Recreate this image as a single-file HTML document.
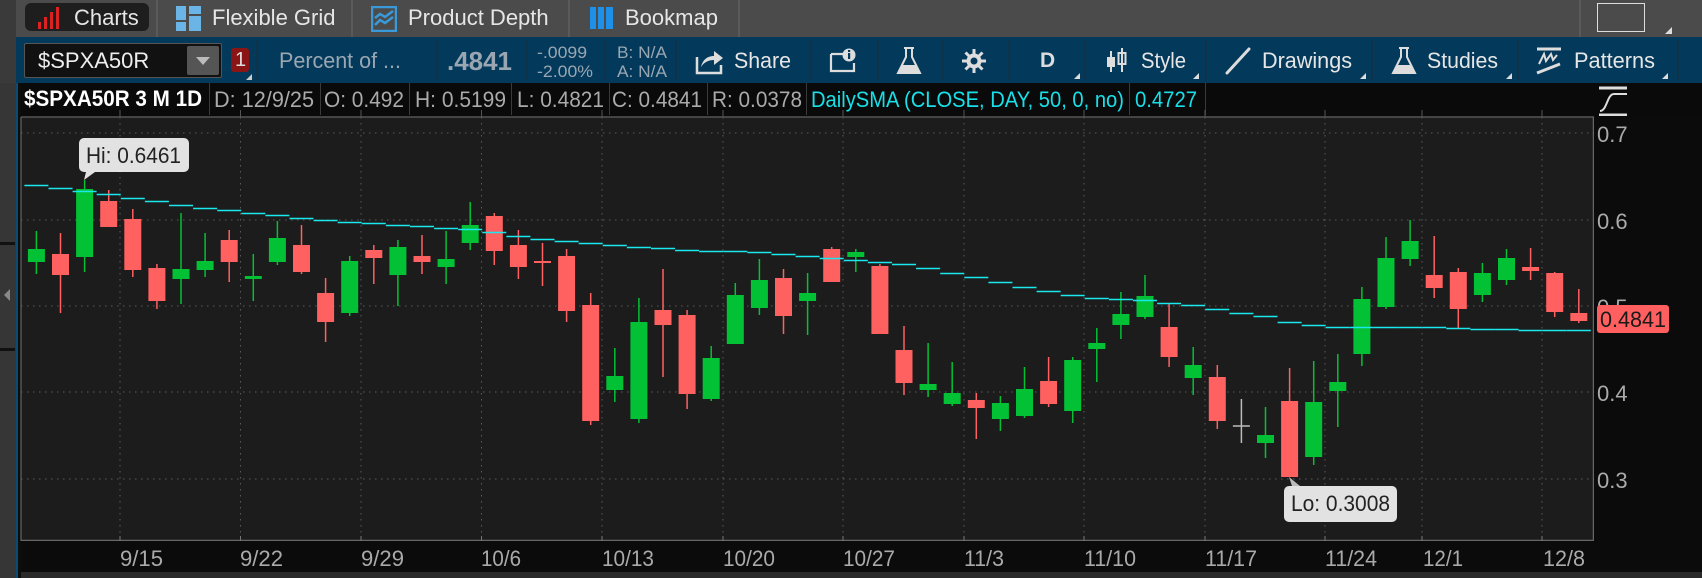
<!DOCTYPE html>
<html><head><meta charset="utf-8">
<style>
*{margin:0;padding:0;box-sizing:border-box}
body{width:1702px;height:578px;overflow:hidden;background:#1c1c1c;font-family:"Liberation Sans",sans-serif;position:relative}
.abs{position:absolute}
.t{position:absolute;white-space:nowrap;display:inline-block;transform-origin:0 0;line-height:1}
.sep{position:absolute;width:2px;background:#10324a}
.sep2{position:absolute;width:2px;background:#5a5a5a}
.sep3{position:absolute;width:1px;background:#3a3a3a}
.corner{position:absolute;width:0;height:0;border-left:7px solid transparent;border-bottom:7px solid #ddd}
</style></head><body>
<!-- tab bar -->
<div class="abs" style="left:0;top:0;width:1702px;height:37px;background:#4b4b4b"></div>
<div class="abs" style="left:0;top:0;width:16px;height:37px;background:#3a3a3a"></div>
<div class="abs" style="left:25px;top:3px;width:124px;height:28px;background:#1e1e1e;border-radius:6px"></div>
<svg class="abs" style="left:36px;top:6px" width="24" height="24"><rect x="2" y="16" width="3" height="7" fill="#d22"/><rect x="8" y="11" width="3" height="12" fill="#d22"/><rect x="14" y="6" width="3" height="17" fill="#d22"/><rect x="20" y="1" width="3" height="22" fill="#d22"/></svg>
<span class="t" style="left:74px;top:7px;font-size:22px;color:#e6e6e6">Charts</span>
<div class="sep2" style="left:156px;top:0;height:37px"></div>
<svg class="abs" style="left:176px;top:6px" width="26" height="26"><rect x="0" y="0" width="10" height="14" fill="#6ab4e6"/><rect x="0" y="16" width="10" height="9" fill="#6ab4e6"/><rect x="13" y="0" width="12" height="8" fill="#6ab4e6"/><rect x="13" y="10" width="12" height="15" fill="#6ab4e6"/></svg>
<span class="t" style="left:212px;top:7px;font-size:22px;color:#e6e6e6">Flexible Grid</span>
<div class="sep2" style="left:351px;top:0;height:37px"></div>
<svg class="abs" style="left:371px;top:6px" width="26" height="26"><rect x="1" y="1" width="24" height="24" fill="none" stroke="#3a9ad9" stroke-width="2.5"/><path d="M4 12 L9 8 L14 11 L22 5 M4 19 L9 14 L14 17 L22 11" stroke="#3a9ad9" stroke-width="2.5" fill="none"/></svg>
<span class="t" style="left:408px;top:7px;font-size:22px;color:#e6e6e6">Product Depth</span>
<div class="sep2" style="left:568px;top:0;height:37px"></div>
<svg class="abs" style="left:590px;top:7px" width="26" height="24"><rect x="0" y="0" width="6" height="22" fill="#1e90e8"/><rect x="8" y="0" width="6" height="22" fill="#1e90e8"/><rect x="16" y="0" width="7" height="22" fill="#1e90e8"/></svg>
<span class="t" style="left:625px;top:7px;font-size:22px;color:#e6e6e6">Bookmap</span>
<div class="sep2" style="left:738px;top:0;height:37px"></div>
<div class="sep2" style="left:1579px;top:0;height:37px"></div>
<div class="abs" style="left:1597px;top:3px;width:48px;height:29px;border:1.5px solid #ddd"></div>
<div class="corner" style="left:1665px;top:27px"></div>

<!-- toolbar -->
<div class="abs" style="left:0;top:37px;width:1702px;height:46px;background:#033a5b"></div>
<div class="abs" style="left:0;top:37px;width:16px;height:46px;background:#3a3a3a"></div>
<div class="abs" style="left:24px;top:43px;width:198px;height:35px;background:#111;border:1px solid #555;border-radius:2px"></div>
<span class="t" style="left:38px;top:50px;font-size:22px;color:#eee">$SPXA50R</span>
<div class="abs" style="left:187px;top:46px;width:32px;height:29px;background:#555;border-radius:2px"></div>
<div class="abs" style="left:196px;top:57px;width:0;height:0;border-left:7px solid transparent;border-right:7px solid transparent;border-top:8px solid #bbb"></div>
<div class="abs" style="left:231px;top:48px;width:18px;height:24px;background:#8b1414;border-radius:3px"></div>
<span class="t" style="left:235px;top:50px;font-size:20px;color:#ddd">1</span>
<div class="corner" style="left:246px;top:74px;border-bottom-color:#ccc;border-left-width:6px;border-bottom-width:6px"></div>
<div class="sep" style="left:256px;top:40px;height:40px"></div>
<span class="t" style="left:279px;top:50px;font-size:22px;color:#9aa7b2;width:122px">Percent of ...</span>
<div class="sep" style="left:436px;top:40px;height:40px"></div>
<span class="t" style="left:447px;top:48px;font-size:26px;font-weight:bold;color:#9aa7b2;width:65px">.4841</span>
<div class="sep" style="left:526px;top:40px;height:40px"></div>
<span class="t" style="left:537px;top:44px;font-size:17px;color:#9aa7b2;width:50px">-.0099</span>
<span class="t" style="left:537px;top:63px;font-size:17px;color:#9aa7b2;width:56px">-2.00%</span>
<div class="sep" style="left:604px;top:40px;height:40px"></div>
<span class="t" style="left:617px;top:44px;font-size:17px;color:#9aa7b2;width:50px">B: N/A</span>
<span class="t" style="left:617px;top:63px;font-size:17px;color:#9aa7b2;width:50px">A: N/A</span>
<div class="sep" style="left:675px;top:40px;height:40px"></div>
<svg class="abs" style="left:695px;top:47px" width="30" height="28"><path d="M2 10 V26 H26 V18" stroke="#ddd" stroke-width="2.5" fill="none"/><path d="M6 20 C8 12 13 9 19 9 V4 L28 11 L19 18 V13 C14 13 9 15 6 20Z" fill="#ddd"/></svg>
<span class="t" style="left:734px;top:50px;font-size:22px;color:#e6e6e6;width:57px">Share</span>
<div class="sep" style="left:810px;top:40px;height:40px"></div>
<svg class="abs" style="left:829px;top:48px" width="28" height="26"><path d="M2 6 H16 M2 6 V23 H25 V15" stroke="#ddd" stroke-width="2.2" fill="none"/><circle cx="20" cy="7" r="6.5" fill="#ddd"/><rect x="19" y="5" width="2.2" height="6" fill="#033a5b"/><rect x="19" y="2" width="2.2" height="2" fill="#033a5b"/></svg>
<div class="sep" style="left:877px;top:40px;height:40px"></div>
<svg class="abs" style="left:896px;top:46px" width="26" height="30"><path d="M8 2 H18 M10 2 V11 L2 27 H24 L16 11 V2" stroke="#ddd" stroke-width="2" fill="none"/><path d="M6 19 H20 L24 27 H2Z" fill="#ddd"/></svg>
<div class="sep" style="left:942px;top:40px;height:40px"></div>
<svg class="abs" style="left:960px;top:47px" width="28" height="28"><g stroke="#ddd" stroke-width="3"><line x1="14" y1="2" x2="14" y2="26"/><line x1="2" y1="14" x2="26" y2="14"/><line x1="5.5" y1="5.5" x2="22.5" y2="22.5"/><line x1="22.5" y1="5.5" x2="5.5" y2="22.5"/></g><circle cx="14" cy="14" r="7.5" fill="#ddd"/><circle cx="14" cy="14" r="3.5" fill="#033a5b"/></svg>
<div class="sep" style="left:1008px;top:40px;height:40px"></div>
<span class="t" style="left:1040px;top:50px;font-size:21px;font-weight:bold;color:#ddd">D</span>
<div class="corner" style="left:1074px;top:73px;border-left-width:6px;border-bottom-width:6px"></div>
<div class="sep" style="left:1084px;top:40px;height:40px"></div>
<svg class="abs" style="left:1106px;top:47px" width="22" height="28"><line x1="5" y1="4" x2="5" y2="25" stroke="#ddd" stroke-width="2"/><rect x="1" y="10" width="8" height="10" fill="#ddd"/><line x1="16" y1="1" x2="16" y2="25" stroke="#ddd" stroke-width="2"/><rect x="12.5" y="6" width="7" height="11" fill="none" stroke="#ddd" stroke-width="2"/></svg>
<span class="t" style="left:1141px;top:50px;font-size:22px;color:#e6e6e6;width:45px">Style</span>
<div class="corner" style="left:1193px;top:73px;border-left-width:6px;border-bottom-width:6px"></div>
<div class="sep" style="left:1205px;top:40px;height:40px"></div>
<svg class="abs" style="left:1224px;top:47px" width="28" height="28"><line x1="3" y1="26" x2="25" y2="2" stroke="#ddd" stroke-width="3" stroke-linecap="round"/></svg>
<span class="t" style="left:1262px;top:50px;font-size:22px;color:#e6e6e6;width:90px">Drawings</span>
<div class="corner" style="left:1360px;top:73px;border-left-width:6px;border-bottom-width:6px"></div>
<div class="sep" style="left:1371px;top:40px;height:40px"></div>
<svg class="abs" style="left:1391px;top:46px" width="26" height="30"><path d="M8 2 H18 M10 2 V11 L2 27 H24 L16 11 V2" stroke="#ddd" stroke-width="2" fill="none"/><path d="M6 19 H20 L24 27 H2Z" fill="#ddd"/></svg>
<span class="t" style="left:1427px;top:50px;font-size:22px;color:#e6e6e6;width:71px">Studies</span>
<div class="corner" style="left:1506px;top:73px;border-left-width:6px;border-bottom-width:6px"></div>
<div class="sep" style="left:1517px;top:40px;height:40px"></div>
<svg class="abs" style="left:1535px;top:46px" width="28" height="30"><line x1="2" y1="3" x2="26" y2="3" stroke="#ddd" stroke-width="3"/><path d="M4 18 L9 8 L11 15 L16 8 L18 14 L22 9" stroke="#ddd" stroke-width="2" fill="none"/><line x1="2" y1="27" x2="25" y2="18" stroke="#ddd" stroke-width="3"/></svg>
<span class="t" style="left:1574px;top:50px;font-size:22px;color:#e6e6e6;width:81px">Patterns</span>
<div class="corner" style="left:1662px;top:73px;border-left-width:6px;border-bottom-width:6px"></div>
<div class="sep" style="left:1677px;top:40px;height:40px"></div>

<!-- info strip -->
<div class="abs" style="left:0;top:83px;width:1702px;height:34px;background:#0a0a0a"></div>
<div class="abs" style="left:0;top:83px;width:16px;height:495px;background:#363636"></div>
<div class="abs" style="left:0;top:242px;width:15px;height:3px;background:#111"></div>
<div class="abs" style="left:0;top:348px;width:15px;height:3px;background:#111"></div>
<div class="abs" style="left:4px;top:289px;width:0;height:0;border-top:6px solid transparent;border-bottom:6px solid transparent;border-right:6px solid #888"></div>
<div class="abs" style="left:16px;top:83px;width:2px;height:495px;background:#0b4a72"></div>
<div class="abs" style="left:18px;top:83px;width:3px;height:495px;background:#0d0d0d"></div>
<span class="t" style="left:24px;top:88px;font-size:22px;font-weight:bold;color:#fff;width:178px">$SPXA50R 3 M 1D</span>
<div class="sep3" style="left:209px;top:83px;height:32px"></div>
<span class="t" style="left:214px;top:89px;font-size:22px;color:#aaa;width:100px">D: 12/9/25</span>
<div class="sep3" style="left:320px;top:83px;height:32px"></div>
<span class="t" style="left:324px;top:89px;font-size:22px;color:#aaa;width:80px">O: 0.492</span>
<div class="sep3" style="left:409px;top:83px;height:32px"></div>
<span class="t" style="left:415px;top:89px;font-size:22px;color:#aaa;width:91px">H: 0.5199</span>
<div class="sep3" style="left:511px;top:83px;height:32px"></div>
<span class="t" style="left:517px;top:89px;font-size:22px;color:#aaa;width:87px">L: 0.4821</span>
<div class="sep3" style="left:609px;top:83px;height:32px"></div>
<span class="t" style="left:612px;top:89px;font-size:22px;color:#aaa;width:90px">C: 0.4841</span>
<div class="sep3" style="left:707px;top:83px;height:32px"></div>
<span class="t" style="left:712px;top:89px;font-size:22px;color:#aaa;width:90px">R: 0.0378</span>
<div class="sep3" style="left:806px;top:83px;height:32px"></div>
<span class="t" style="left:811px;top:89px;font-size:22px;color:#19e0e8;width:313px">DailySMA (CLOSE, DAY, 50, 0, no)</span>
<div class="sep3" style="left:1129px;top:83px;height:32px"></div>
<span class="t" style="left:1135px;top:89px;font-size:22px;color:#19e0e8;width:62px">0.4727</span>
<div class="sep3" style="left:1205px;top:83px;height:32px"></div>
<svg class="abs" style="left:1597px;top:86px" width="34" height="30"><line x1="2" y1="2" x2="30" y2="2" stroke="#ddd" stroke-width="3"/><path d="M3 25 C10 25 10 8 17 8 C24 8 24 8 30 8" stroke="#ddd" stroke-width="2" fill="none"/><line x1="2" y1="29" x2="30" y2="29" stroke="#ddd" stroke-width="3"/></svg>

<!-- chart -->
<svg id="ch" class="abs" style="left:0;top:0" width="1702" height="578"></svg>
<div class="abs" style="left:1594px;top:117px;width:108px;height:461px;background:#0b0b0b"></div>
<div class="abs" style="left:21px;top:541px;width:1573px;height:31px;background:#0b0b0b"></div>
<div class="abs" style="left:21px;top:572px;width:1681px;height:6px;background:#2a2a2a"></div>
<span class="t" style="left:1597px;top:124px;font-size:22px;color:#aaa">0.7</span>
<span class="t" style="left:1597px;top:211px;font-size:22px;color:#aaa">0.6</span>
<span class="t" style="left:1597px;top:297px;font-size:22px;color:#aaa">0.5</span>
<span class="t" style="left:1597px;top:383px;font-size:22px;color:#aaa">0.4</span>
<span class="t" style="left:1597px;top:470px;font-size:22px;color:#aaa">0.3</span>
<div class="abs" style="left:1597px;top:305px;width:72px;height:28px;background:#ff5f5f;border-radius:3px"></div>
<span class="t" style="left:1600px;top:309px;font-size:22px;color:#1a1a1a;width:66px">0.4841</span>

<span class="t" style="left:120px;top:548px;font-size:22px;color:#aaa;width:43px">9/15</span>
<span class="t" style="left:240px;top:548px;font-size:22px;color:#aaa;width:43px">9/22</span>
<span class="t" style="left:361px;top:548px;font-size:22px;color:#aaa;width:43px">9/29</span>
<span class="t" style="left:481px;top:548px;font-size:22px;color:#aaa;width:40px">10/6</span>
<span class="t" style="left:602px;top:548px;font-size:22px;color:#aaa;width:52px">10/13</span>
<span class="t" style="left:723px;top:548px;font-size:22px;color:#aaa;width:52px">10/20</span>
<span class="t" style="left:843px;top:548px;font-size:22px;color:#aaa;width:52px">10/27</span>
<span class="t" style="left:964px;top:548px;font-size:22px;color:#aaa;width:40px">11/3</span>
<span class="t" style="left:1084px;top:548px;font-size:22px;color:#aaa;width:52px">11/10</span>
<span class="t" style="left:1205px;top:548px;font-size:22px;color:#aaa;width:52px">11/17</span>
<span class="t" style="left:1325px;top:548px;font-size:22px;color:#aaa;width:52px">11/24</span>
<span class="t" style="left:1423px;top:548px;font-size:22px;color:#aaa;width:40px">12/1</span>
<span class="t" style="left:1543px;top:548px;font-size:22px;color:#aaa;width:42px">12/8</span>

<div class="abs" style="left:79px;top:138px;width:110px;height:34px;background:#e2e2e2;border-radius:5px"></div>
<span class="t" style="left:86px;top:145px;font-size:22px;color:#222;width:95px">Hi: 0.6461</span>
<div class="abs" style="left:1284px;top:486px;width:113px;height:36px;background:#e2e2e2;border-radius:5px"></div>
<span class="t" style="left:1291px;top:493px;font-size:22px;color:#222;width:99px">Lo: 0.3008</span>

<script>
(function(){
var ns="http://www.w3.org/2000/svg",s=document.getElementById('ch');
function el(n,a){var e=document.createElementNS(ns,n);for(var k in a)e.setAttribute(k,a[k]);s.appendChild(e);return e;}
el('rect',{x:21,y:117,width:1573,height:424,fill:'#1c1c1c'});
el('line',{x1:21,y1:117,x2:1594,y2:117,stroke:'#555','stroke-width':1.5});
el('line',{x1:21,y1:117,x2:21,y2:541,stroke:'#555','stroke-width':1.5});
el('line',{x1:1593.5,y1:117,x2:1593.5,y2:541,stroke:'#666','stroke-width':1.5});
el('line',{x1:21,y1:540.5,x2:1594,y2:540.5,stroke:'#666','stroke-width':1.5});
[133,220,306,392,479].forEach(function(y){el('line',{x1:21,y1:y,x2:1593,y2:y,stroke:'#5a5a5a','stroke-width':1,'stroke-dasharray':'1.5 4.5'});el('line',{x1:1593,y1:y,x2:1600,y2:y,stroke:'#777'});});
[120,240.5,361,481.5,602,723,843,964,1084,1205,1325,1422,1542].forEach(function(x){el('line',{x1:x,y1:117,x2:x,y2:541,stroke:'#5a5a5a','stroke-width':1,'stroke-dasharray':'1.5 4.5'});el('line',{x1:x,y1:110,x2:x,y2:117,stroke:'#555'});el('line',{x1:x,y1:536,x2:x,y2:541,stroke:'#777'});});
var d=[
['G',249,262,231,274],['R',254,275,233,313],['G',189,257,180,272],['R',201,227,190,227],['R',219,270,209,277],
['R',268,301,264,309],['G',269,279,213,304],['G',261,270,233,277],['R',240,262,230,282],['G',276,279,254,301],
['G',238,262,221,265],['R',245,272,225,274],['R',293,322,278,342],['G',261,313,256,316],['R',250,258,245,284],
['G',247,275,240,306],['R',256,262,235,274],['G',259,267,231,284],['G',225,243,202,250],['R',216,251,213,265],
['R',245,267,230,279],['R',261,263,243,286],['R',256,311,249,322],['R',305,421,293,425],['G',376,390,348,402],
['G',322,419,298,423],['R',310,325,269,377],['R',315,394,310,409],['G',358,399,346,401],['G',295,344,283,344],
['G',280,308,259,315],['R',278,316,269,334],['G',293,301,273,335],['R',249,282,247,282],['G',252,257,249,272],
['R',266,334,264,334],['R',350,383,326,395],['G',384,390,343,397],['G',393,404,362,406],['R',400,408,393,439],
['G',403,419,396,431],['G',389,416,367,418],['R',381,404,357,407],['G',360,411,357,423],['G',343,349,328,382],
['G',314,325,292,339],['G',296,317,275,319],['R',327,357,304,367],['G',365,378,347,395],['R',377,421,365,429],
['W',426,427,399,443],['G',435,443,407,458],['R',401,477,368,477],['G',402,457,361,465],['G',382,391,354,427],
['G',299,354,287,366],['G',258,307,237,309],['G',241,259,220,266],['R',275,288,236,298],['R',272,309,268,328],
['G',273,295,263,302],['G',258,280,249,285],['R',267,271,248,280],['R',273,312,272,317],['R',313,321,289,323]];
var col={G:'#03c134',R:'#ff6060',W:'#bbbbbb'};
d.forEach(function(c,i){var x=36.4+24.1*i,f=col[c[0]];
el('line',{x1:x,y1:c[3],x2:x,y2:c[4],stroke:f,'stroke-width':1.5});
var h=Math.max(c[2]-c[1],2);
if(c[0]=='W'){el('line',{x1:x-8.5,y1:c[1],x2:x+8.5,y2:c[1],stroke:f,'stroke-width':1.5});}
else el('rect',{x:x-8.5,y:c[1],width:17,height:h,fill:f});});
var sp=[[0,185],[3,194],[6,205],[9,213],[12,220],[15,225],[18,229],[21,239],[24,245],[27,250],[30,252],[33,258],[36,264],[39,277],[40,282],[42,291],[44,298],[46,300],[47,303],[48,305],[49,309],[50,313],[51,316],[52,322],[53,325],[54,327],[58,327],[60,329],[64,330]];
function sy(i){for(var k=0;k<sp.length-1;k++){if(i>=sp[k][0]&&i<=sp[k+1][0]){var a=sp[k],b=sp[k+1];return a[1]+(b[1]-a[1])*(i-a[0])/(b[0]-a[0]);}}return 330;}
for(var i=0;i<65;i++){var x=36.4+24.1*i,y=Math.round(sy(i))+0.5;el('line',{x1:x-12,y1:y,x2:x+12,y2:y,stroke:'#19e8ee','stroke-width':1.5});}
el('path',{d:'M86 172 L84 180 L95 172Z',fill:'#e2e2e2'});
el('path',{d:'M1289 477 L1292 486 L1300 486Z',fill:'#bbb'});
// fit texts
var ts=document.querySelectorAll('.t');
for(var j=0;j<ts.length;j++){var t=ts[j];var w=parseFloat(t.style.width);if(!w)continue;t.style.width='auto';var r=t.getBoundingClientRect().width;if(r>0)t.style.transform='scaleX('+(w/r)+')';}
})();
</script>
</body></html>
